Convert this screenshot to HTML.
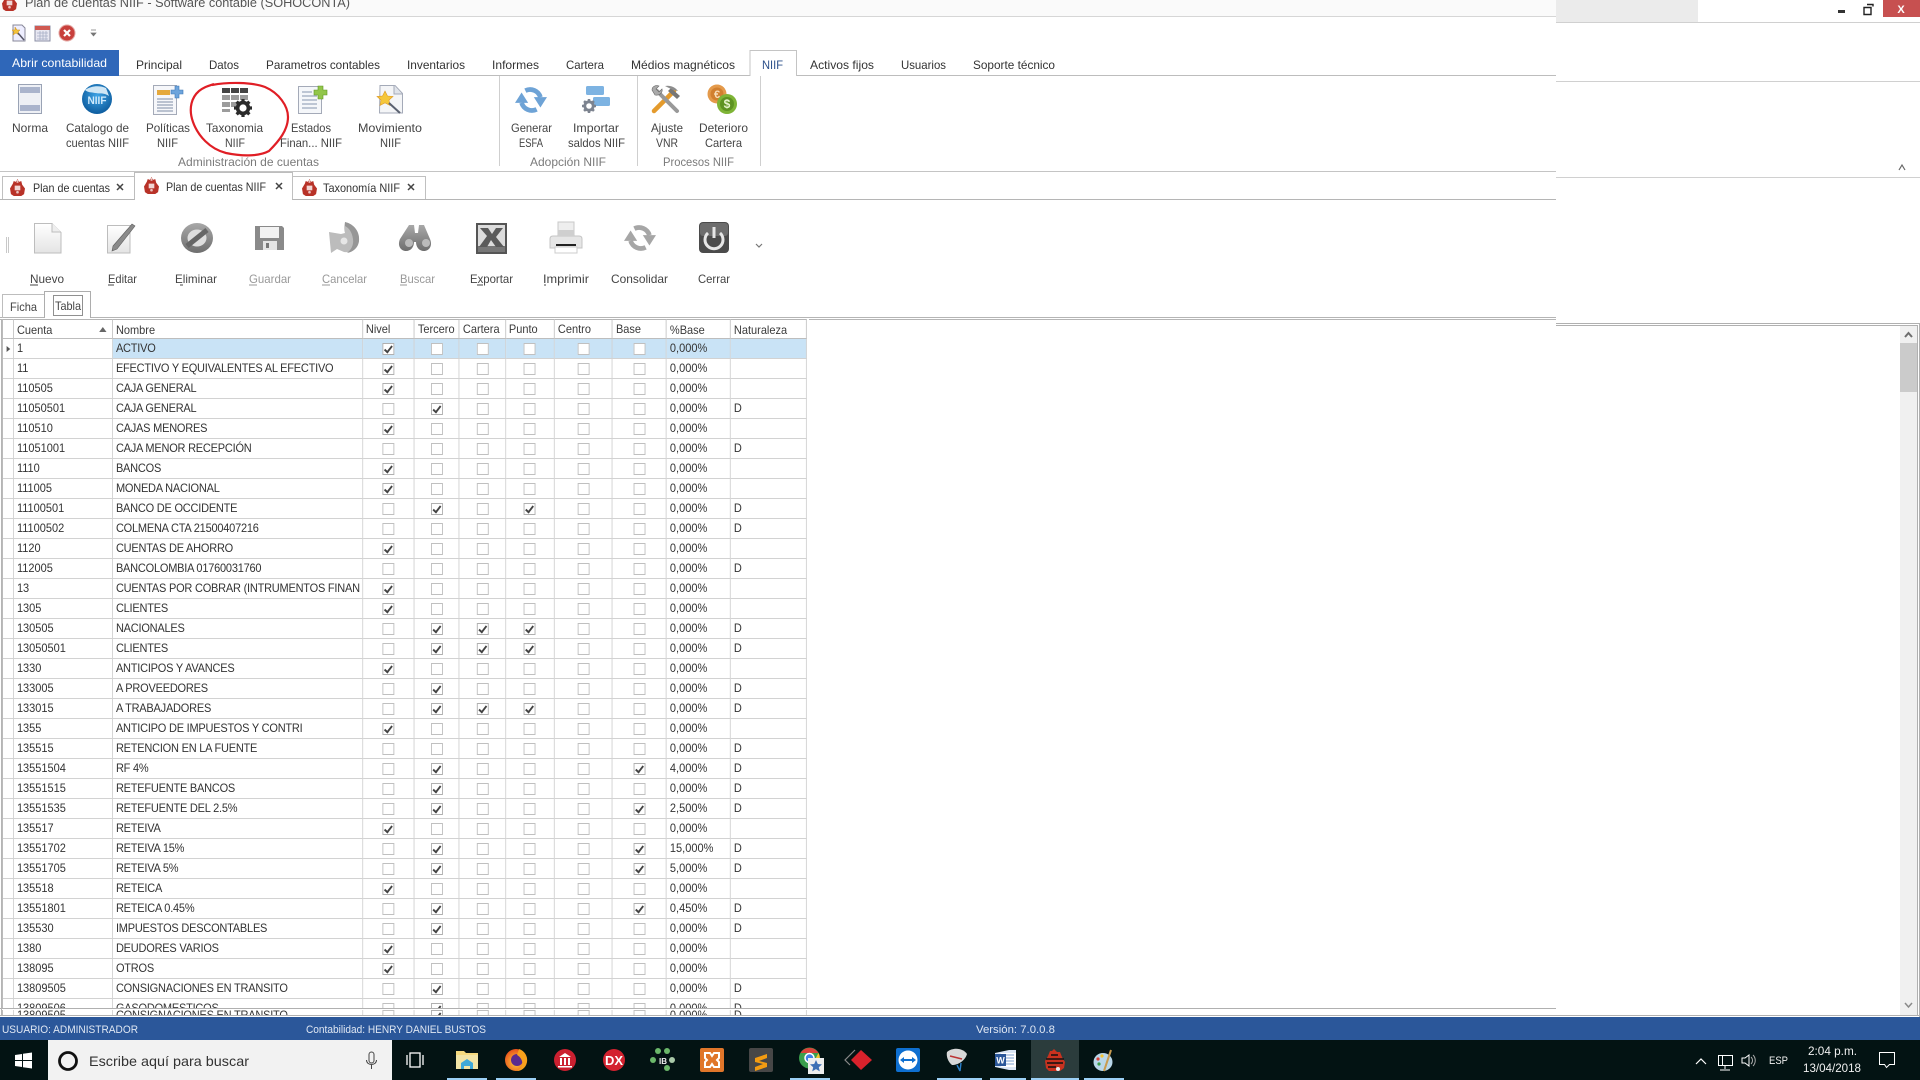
<!DOCTYPE html>
<html lang="es"><head><meta charset="utf-8"><title>Plan de cuentas NIIF - Software contable (SOHOCONTA)</title>
<style>
html,body{margin:0;padding:0;background:#fff;width:1920px;height:1080px;overflow:hidden}
svg.bg{position:absolute;left:0;top:0}
svg text{font-family:"Liberation Sans",sans-serif}
.g{position:absolute;left:2px;width:807px;overflow:hidden;background:#fff}
table{border-collapse:separate;border-spacing:0;table-layout:fixed;width:878.1px;font:12px/19px "Liberation Sans",sans-serif;color:#333;border-left:1px solid #b5b5b5;transform:scaleX(.91667);transform-origin:0 0}
td{height:20px;box-sizing:border-box;padding:0 0 0 3.3px;border-right:1px solid #d2d2d2;border-bottom:1px solid #d2d2d2;white-space:nowrap;overflow:hidden;vertical-align:middle}
td:nth-child(3){letter-spacing:-.24px}
td:nth-child(n+4):nth-child(-n+9){text-align:center;padding:0}
tr.h td{border-top:1px solid #b5b5b5;border-bottom:1px solid #bdbdbd;border-right:1px solid #c6c6c6;text-align:left!important;padding-left:3.3px!important;padding-top:2px;line-height:16px;letter-spacing:0;color:#3a3a3a}
tr.s td:nth-child(n+3){background:#c9e3f6}
i{display:inline-block;width:13px;height:12px;box-sizing:border-box;border:1px solid #c0c0c0;background:#fff;vertical-align:middle;position:relative}
i.c{border-color:#b0b0b0}
i.c:after{content:"";position:absolute;left:3px;top:0;width:3px;height:7px;border-right:2px solid #444;border-bottom:2px solid #444;transform:rotate(40deg)}
</style></head><body>
<svg class="bg" width="1920" height="1080" viewBox="0 0 1920 1080" xmlns="http://www.w3.org/2000/svg">
<defs>
<linearGradient id="pg" x1="0" y1="0" x2="0" y2="1"><stop offset="0" stop-color="#fff"/><stop offset="1" stop-color="#e4e4e4"/></linearGradient>
<linearGradient id="gr" x1="0" y1="0" x2="0" y2="1"><stop offset="0" stop-color="#a8a8a8"/><stop offset="1" stop-color="#6e6e6e"/></linearGradient>
<radialGradient id="gl" cx=".5" cy=".4" r=".6"><stop offset="0" stop-color="#3fa4e6"/><stop offset="1" stop-color="#0d5c9e"/></radialGradient>
<radialGradient id="ffx" cx=".5" cy=".6" r=".6"><stop offset="0" stop-color="#ffce3a"/><stop offset="1" stop-color="#e8501c"/></radialGradient>
<symbol id="sync" viewBox="-17 -17 34 34" overflow="visible">
<path d="M6 10A11.500 11.500 0 0 1-10 3M-6-10A11.500 11.500 0 0 1 10-3" fill="none" stroke="currentColor" stroke-width="5"/>
<path d="M-17 3H-3L-10-8zM17-3H3L10 8z" fill="currentColor"/>
</symbol>
<symbol id="blob" viewBox="0 0 16 18" overflow="visible">
<path d="M8 0l2 3 2-1 1 4 3 4-1 6-3 2H4l-3-2-1-6 3-5 1-3 2 1z" fill="#b83228"/>
<path d="M5 7h6v5H5z" fill="#fff" opacity=".8"/><path d="M7 1h2v3H7z" fill="#fff" opacity=".7"/><circle cx="8" cy="14" r="1.4" fill="#fff" opacity=".7"/>
</symbol>
<symbol id="gear" viewBox="-10 -10 20 20" overflow="visible">
<circle r="6" fill="none" stroke="currentColor" stroke-width="4"/>
<path d="M-1.8-10h3.6v4h-3.6zM-1.8 6h3.6v4h-3.6zM-10-1.8h4v3.6h-4zM6-1.8h4v3.6H6z" fill="currentColor"/>
<path d="M-1.8-10h3.6v4h-3.6zM-1.8 6h3.6v4h-3.6zM-10-1.8h4v3.6h-4zM6-1.8h4v3.6H6z" fill="currentColor" transform="rotate(45)"/>
</symbol>
</defs>

<!-- frame -->
<rect width="1920" height="16" fill="#fafafa"/>
<rect x="1556" width="142" height="22" fill="#ebebeb"/><rect x="1698" width="222" height="22" fill="#fff"/>
<rect y="16" width="1556" height="1" fill="#d6d6d6"/>
<rect x="1556" y="22" width="364" height="1" fill="#d0d0d0"/>
<rect x="119" y="75" width="1437" height="1" fill="#bdbdbd"/>
<rect x="1556" y="81" width="364" height="1" fill="#d0d0d0"/>
<rect y="171" width="1556" height="1" fill="#c4c4c4"/>
<rect x="1556" y="177" width="364" height="1" fill="#d0d0d0"/>
<rect y="199" width="1556" height="1" fill="#b5b5b5"/>
<rect y="317" width="1556" height="1" fill="#b5b5b5"/><rect y="319" width="1556" height="1" fill="#b5b5b5"/>
<rect x="1556" y="323" width="364" height="1" fill="#b0b0b0"/><rect x="1556" y="325" width="361" height="1" fill="#b0b0b0"/>
<rect x="1917" y="325" width="1" height="690" fill="#b0b0b0"/><rect x="1919" y="323" width="1" height="694" fill="#b0b0b0"/>
<rect y="1008" width="1556" height="1" fill="#b0b0b0"/>
<rect y="1015" width="1920" height="1" fill="#b0b0b0"/>
<rect x="1" y="319" width="1" height="696" fill="#b5b5b5"/>

<!-- title -->
<use href="#blob" x="2" y="-6" width="15" height="17"/>
<text x="25" y="7" font-size="13" fill="#555" textLength="325" lengthAdjust="spacingAndGlyphs">Plan de cuentas NIIF - Software contable (SOHOCONTA)</text>
<rect x="1883" width="37" height="17" fill="#c75050"/>
<text x="1901" y="13" font-size="11" font-weight="bold" fill="#fff" text-anchor="middle">X</text>
<rect x="1838" y="10" width="7" height="3" fill="#333"/>
<path d="M1864 7.500h7v7h-7zM1867 4.500h6v2" fill="#fff" stroke="#222" stroke-width="1.400"/>
<path d="M1899 170l3-5 3 5" fill="none" stroke="#666" stroke-width="1.200"/>

<!-- quick access -->
<g>
<path d="M13 25h9l3 3v13H13z" fill="#eef" stroke="#889"/>
<path d="M15 27l2 3 3 0-2 2 1 3-3-2-3 2 1-3-2-2 3 0z" fill="#f3c33a" stroke="#c98a10" stroke-width=".5"/>
<path d="M18 33l6 7" stroke="#556" stroke-width="1.500"/>
<rect x="35" y="26" width="15" height="15" fill="#e8e8f2" stroke="#8b8fa5"/><rect x="35" y="26" width="15" height="4" fill="#cf5a52"/>
<path d="M37 33h11M37 36h11M37 39h11M40 31v9M43 31v9M46 31v9" stroke="#a7aec6" stroke-width=".8"/>
<circle cx="67" cy="33" r="8" fill="#c8403c"/><circle cx="67" cy="33" r="8" fill="none" stroke="#e3a6a2"/><path d="M64 30l6 6m0-6l-6 6" stroke="#fff" stroke-width="2.200"/>
<path d="M91 30h5M91 33h5l-2.500 3z" fill="#777" stroke="#777" stroke-width=".7"/>
</g>

<!-- ribbon tabs -->
<rect y="50" width="119" height="26" fill="#2f67b9"/>
<text x="12" y="67" font-size="12" fill="#fff" textLength="95" lengthAdjust="spacingAndGlyphs">Abrir contabilidad</text>
<g font-size="12" fill="#333">
<text x="136" y="69" textLength="46" lengthAdjust="spacingAndGlyphs">Principal</text>
<text x="209" y="69" textLength="30" lengthAdjust="spacingAndGlyphs">Datos</text>
<text x="266" y="69" textLength="114" lengthAdjust="spacingAndGlyphs">Parametros contables</text>
<text x="407" y="69" textLength="58" lengthAdjust="spacingAndGlyphs">Inventarios</text>
<text x="492" y="69" textLength="47" lengthAdjust="spacingAndGlyphs">Informes</text>
<text x="566" y="69" textLength="38" lengthAdjust="spacingAndGlyphs">Cartera</text>
<text x="631" y="69" textLength="104" lengthAdjust="spacingAndGlyphs">Médios magnéticos</text>
<text x="810" y="69" textLength="64" lengthAdjust="spacingAndGlyphs">Activos fijos</text>
<text x="901" y="69" textLength="45" lengthAdjust="spacingAndGlyphs">Usuarios</text>
<text x="973" y="69" textLength="82" lengthAdjust="spacingAndGlyphs">Soporte técnico</text>
</g>
<path d="M750 76V50.500H796.500V76" fill="#fff" stroke="#c4c4c4"/><rect x="751" y="74" width="45" height="3" fill="#fff"/>
<text x="762" y="69" font-size="12" fill="#2b4f8a" textLength="21" lengthAdjust="spacingAndGlyphs">NIIF</text>

<!-- ribbon labels -->
<g font-size="12" fill="#444">
<text x="12" y="132" textLength="36" lengthAdjust="spacingAndGlyphs">Norma</text>
<text x="66" y="132" textLength="63" lengthAdjust="spacingAndGlyphs">Catalogo de</text>
<text x="66" y="147" textLength="63" lengthAdjust="spacingAndGlyphs">cuentas NIIF</text>
<text x="146" y="132" textLength="44" lengthAdjust="spacingAndGlyphs">Políticas</text>
<text x="157" y="147" textLength="21" lengthAdjust="spacingAndGlyphs">NIIF</text>
<text x="206" y="132" textLength="57" lengthAdjust="spacingAndGlyphs">Taxonomia</text>
<text x="225" y="147" textLength="20" lengthAdjust="spacingAndGlyphs">NIIF</text>
<text x="291" y="132" textLength="40" lengthAdjust="spacingAndGlyphs">Estados</text>
<text x="280" y="147" textLength="62" lengthAdjust="spacingAndGlyphs">Finan... NIIF</text>
<text x="358" y="132" textLength="64" lengthAdjust="spacingAndGlyphs">Movimiento</text>
<text x="380" y="147" textLength="21" lengthAdjust="spacingAndGlyphs">NIIF</text>
<text x="511" y="132" textLength="41" lengthAdjust="spacingAndGlyphs">Generar</text>
<text x="519" y="147" textLength="24" lengthAdjust="spacingAndGlyphs">ESFA</text>
<text x="573" y="132" textLength="46" lengthAdjust="spacingAndGlyphs">Importar</text>
<text x="568" y="147" textLength="57" lengthAdjust="spacingAndGlyphs">saldos NIIF</text>
<text x="651" y="132" textLength="32" lengthAdjust="spacingAndGlyphs">Ajuste</text>
<text x="656" y="147" textLength="22" lengthAdjust="spacingAndGlyphs">VNR</text>
<text x="699" y="132" textLength="49" lengthAdjust="spacingAndGlyphs">Deterioro</text>
<text x="705" y="147" textLength="37" lengthAdjust="spacingAndGlyphs">Cartera</text>
</g>
<g font-size="12" fill="#7a7a7a">
<text x="178" y="166" textLength="141" lengthAdjust="spacingAndGlyphs">Administración de cuentas</text>
<text x="530" y="166" textLength="76" lengthAdjust="spacingAndGlyphs">Adopción NIIF</text>
<text x="663" y="166" textLength="71" lengthAdjust="spacingAndGlyphs">Procesos NIIF</text>
</g>
<path d="M499.500 76V166M637.500 76V166M760.500 76V166" stroke="#cfcfcf"/>

<!-- ribbon icons -->
<rect x="18.500" y="84.500" width="23" height="29" fill="#eef0f5" stroke="#9aa3b5"/><rect x="20" y="87" width="20" height="6" fill="#aab4cc"/><rect x="20" y="105" width="20" height="6" fill="#aab4cc"/>
<circle cx="97" cy="99" r="15" fill="url(#gl)"/><path d="M85 90c6-4 14-5 21-2l3 8c-6-4-10-2-14-3s-6 0-10-3z" fill="#cfe6f5"/>
<text x="97" y="104" font-size="11" font-weight="bold" fill="#cfe9fb" text-anchor="middle" textLength="19" lengthAdjust="spacingAndGlyphs">NIIF</text>
<rect x="153.500" y="85.500" width="23" height="29" fill="#f6f7fa" stroke="#a4aab8"/><rect x="157" y="90" width="13" height="5" fill="#e5a93c"/>
<path d="M157 99h16M157 102h16M157 105h16M157 108h16M157 111h16" stroke="#7f8ca5"/>
<path d="M175 86h4v4h4v4h-4v4h-4v-4h-4v-4h4z" fill="#6da4dc" stroke="#3d78b6" stroke-width=".6"/>
<rect x="222" y="88" width="8" height="5" fill="#444"/><rect x="231" y="88" width="8" height="5" fill="#444"/><rect x="240" y="88" width="8" height="5" fill="#444"/>
<g fill="#9c9c9c"><rect x="222" y="95" width="8" height="5"/><rect x="231" y="95" width="8" height="5"/><rect x="240" y="95" width="8" height="5"/><rect x="222" y="102" width="8" height="5"/><rect x="231" y="102" width="8" height="5"/><rect x="222" y="109" width="8" height="3"/></g>
<use href="#gear" x="234" y="99" width="18" height="18" color="#2b2b2b"/>
<rect x="298.500" y="86.500" width="23" height="27" fill="#f5f7fa" stroke="#a4aab8"/><path d="M302 92h10M302 96h15M302 100h15M302 104h15M302 108h15" stroke="#8595ad"/>
<path d="M318 86h5v4h4v5h-4v4h-5v-4h-4v-5h4z" fill="#92c64a" stroke="#5f9425" stroke-width=".6"/>
<path d="M380 85.500h15l7.500 8v19.500h-23z" fill="#f4f5f7" stroke="#a4aab8"/><path d="M394 85v9h8" fill="#dfe3ea" stroke="#a4aab8"/>
<path d="M385 91l2.500 5 5.500.5-4 3.500 1 5.500-5-2.700-5 2.700 1-5.500-4-3.500 5.500-.5z" fill="#f5c73a" stroke="#dc9622" stroke-width=".6"/>
<path d="M389 103l11 10" stroke="#5a6170" stroke-width="2"/>
<use href="#sync" x="515" y="84" width="32" height="32" color="#6ea3d6"/>
<rect x="586" y="86" width="18" height="9" rx="1.500" fill="#7db3e2"/><rect x="593" y="97" width="17" height="9" rx="1.500" fill="#7db3e2"/>
<use href="#gear" x="582" y="99" width="14" height="14" color="#7c838f"/>
<path d="M654 111l20-20" stroke="#e49b2d" stroke-width="4.500" stroke-linecap="round"/>
<path d="M671 88l9 8-3 3-9-8z" fill="#777"/><path d="M665 86c5-1 10 1 13 5l-5-1z" fill="#8d8d8d"/>
<path d="M657 91l20 20" stroke="#999" stroke-width="4" stroke-linecap="round"/>
<path d="M652 90c0-4 4-5 7-4l-3 3 3 3 3-3c1 4-3 7-7 6z" fill="#aaa" stroke="#666" stroke-width=".6"/>
<circle cx="717" cy="94" r="9.500" fill="#e49a4b"/><circle cx="717" cy="94" r="6.500" fill="#d17f2f"/><text x="717" y="98" font-size="11" font-weight="bold" fill="#f8dcb7" text-anchor="middle">€</text>
<circle cx="727" cy="104" r="10" fill="#7eb436"/><circle cx="727" cy="104" r="7" fill="#5e9322"/><text x="727" y="108" font-size="12" font-weight="bold" fill="#e8f4cf" text-anchor="middle">$</text>

<!-- red circle annotation -->
<path d="M212 85C228 82 252 82 265 87C279 93 288 106 288 117C288 130 279 141 269 151C258 157 240 156 226 153C210 149 198 136 193 122C188 108 192 97 199 91C204 87 208 86 214 84" fill="none" stroke="#e01e25" stroke-width="2.200"/>

<!-- document tabs -->
<path d="M2.500 199V176.500H134M292 176.500H425.500V199" fill="none" stroke="#c0c0c0"/>
<path d="M134.500 199.500V172.500H292.500V199.500" fill="#fff" stroke="#bdbdbd"/>
<path d="M292.500 175V199" stroke="#c0c0c0"/>
<rect x="135" y="198" width="157" height="3" fill="#fff"/>
<use href="#blob" x="10" y="179" width="15" height="17"/><use href="#blob" x="144" y="177" width="15" height="17"/><use href="#blob" x="302" y="179" width="15" height="17"/>
<g font-size="12" fill="#333">
<text x="33" y="192" textLength="77" lengthAdjust="spacingAndGlyphs">Plan de cuentas</text>
<text x="166" y="191" textLength="100" lengthAdjust="spacingAndGlyphs">Plan de cuentas NIIF</text>
<text x="323" y="192" textLength="77" lengthAdjust="spacingAndGlyphs">Taxonomía NIIF</text>
</g>
<path d="M117 184l6 6m0-6l-6 6M276 183l6 6m0-6l-6 6M408 184l6 6m0-6l-6 6" stroke="#444" stroke-width="1.500"/>

<!-- toolbar -->
<path d="M6.500 237v16M8.500 237v16" stroke="#c8c8c8"/>
<g font-size="12" fill="#444">
<text x="30" y="283" textLength="34" lengthAdjust="spacingAndGlyphs">Nuevo</text>
<text x="108" y="283" textLength="29" lengthAdjust="spacingAndGlyphs">Editar</text>
<text x="175" y="283" textLength="42" lengthAdjust="spacingAndGlyphs">Eliminar</text>
<text x="470" y="283" textLength="43" lengthAdjust="spacingAndGlyphs">Exportar</text>
<text x="543" y="283" textLength="46" lengthAdjust="spacingAndGlyphs">Imprimir</text>
<text x="611" y="283" textLength="57" lengthAdjust="spacingAndGlyphs">Consolidar</text>
<text x="698" y="283" textLength="32" lengthAdjust="spacingAndGlyphs">Cerrar</text>
</g>
<g font-size="12" fill="#999">
<text x="249" y="283" textLength="42" lengthAdjust="spacingAndGlyphs">Guardar</text>
<text x="322" y="283" textLength="45" lengthAdjust="spacingAndGlyphs">Cancelar</text>
<text x="400" y="283" textLength="35" lengthAdjust="spacingAndGlyphs">Buscar</text>
</g>
<path d="M30 285h8M108 285h6M180 285h3M544 285h2M477 285h6" stroke="#444"/>
<path d="M249 285h8M322 285h8M400 285h7" stroke="#999"/>
<!-- toolbar icons -->
<path d="M34.500 223.500H52l9 9v20.500H34.500z" fill="url(#pg)" stroke="#bdbdbd"/><path d="M52 223v9h9" fill="#eee" stroke="#bdbdbd"/>
<path d="M107.500 225.500H130v27.500H107.500z" fill="url(#pg)" stroke="#bdbdbd"/><path d="M113 246l19-22 3 2-18 23-5 2z" fill="#8a8a8a" stroke="#5f5f5f" stroke-width=".6"/>
<ellipse cx="197" cy="238" rx="16" ry="15" fill="url(#gr)"/><ellipse cx="197" cy="238" rx="9.500" ry="8.500" fill="#dedede"/><path d="M187 246l20-16" stroke="#666" stroke-width="5"/>
<path d="M255 226h27l2 2v22h-29z" fill="#8a8a8a"/><rect x="260" y="227" width="19" height="11" fill="#f2f2f2"/><rect x="263" y="241" width="14" height="9" fill="#e4e4e4"/><rect x="266" y="243" width="3" height="5" fill="#777"/>
<path d="M329 232l12 2 4-1c-1-3-1-7 0-11 9 2 15 10 14 19-1 8-8 12-15 11l-7-3-6 4z" fill="#bcbcbc"/><path d="M345 222c9 2 15 10 14 19-1 7-6 11-12 12 4-3 7-8 6-14-1-7-4-11-8-13z" fill="#969696"/><circle cx="344" cy="241" r="3.500" fill="#e6e6e6"/>
<path d="M409 225h5l1 8h3l1-8h5l6 14c3 7-1 12-6 12s-8-4-8-9h-2c0 5-3 9-8 9s-9-5-6-12z" fill="url(#gr)"/><circle cx="409" cy="243" r="4" fill="#bbb"/><circle cx="426" cy="243" r="4" fill="#bbb"/>
<rect x="476" y="223" width="31" height="31" fill="#555"/><rect x="478" y="225" width="27" height="27" fill="#dcdcdc"/><rect x="478" y="246" width="27" height="6" fill="#777"/>
<path d="M480 228h8l4 6 4-6h7l-7 9 8 10h-8l-5-7-4 7h-8l8-11z" fill="#5a5a5a"/>
<rect x="558" y="222" width="16" height="14" fill="#eee" stroke="#c8c8c8"/><path d="M553 236h26c2 0 3 1 3 3v9h-32v-9c0-2 1-3 3-3z" fill="#e6e6e6" stroke="#c4c4c4"/><rect x="556" y="244" width="20" height="2" fill="#222"/><rect x="555" y="247" width="22" height="6" fill="#fff" stroke="#ccc"/><rect x="558" y="230" width="16" height="6" fill="#cfcfcf"/>
<use href="#sync" x="624" y="222" width="32" height="32" color="#a6a6a6"/>
<rect x="699" y="222" width="30" height="31" rx="4" fill="#4b4b4b"/><rect x="700" y="223" width="28" height="13" rx="3" fill="#6d6d6d"/>
<path d="M708 233a9 9 0 1 0 12 0" fill="none" stroke="#e6e6e6" stroke-width="3"/><path d="M714 227v11" stroke="#e6e6e6" stroke-width="3"/>
<path d="M756 244l3 3 3-3" fill="none" stroke="#777" stroke-width="1.200"/>

<!-- Ficha/Tabla -->
<path d="M2.500 318V294.500H44.500" fill="none" stroke="#bdbdbd"/>
<path d="M44.500 318V291.500H90.500V318" fill="#fff" stroke="#adadad"/><rect x="45" y="316" width="45" height="4" fill="#fff"/>
<rect x="53.500" y="295.500" width="29" height="20" fill="none" stroke="#222" stroke-dasharray="1 1"/>
<text x="10" y="311" font-size="12" fill="#444" textLength="27" lengthAdjust="spacingAndGlyphs">Ficha</text>
<text x="55" y="310" font-size="12" fill="#444" textLength="26" lengthAdjust="spacingAndGlyphs">Tabla</text>

<!-- scrollbar -->
<rect x="1900" y="326" width="17" height="689" fill="#f0f0f0"/>
<rect x="1900" y="343" width="17" height="49" fill="#cbcbcb"/>
<path d="M1905 337l3.500-4 3.500 4" fill="none" stroke="#6e6e6e" stroke-width="2"/>
<path d="M1905 1003l3.500 4 3.500-4" fill="none" stroke="#8a8a8a" stroke-width="1.500"/>

<!-- status bar -->
<rect y="1017" width="1920" height="23" fill="#2b579a"/>
<g font-size="11" fill="#dfe7f3">
<text x="2" y="1033" textLength="136" lengthAdjust="spacingAndGlyphs">USUARIO: ADMINISTRADOR</text>
<text x="306" y="1033" textLength="180" lengthAdjust="spacingAndGlyphs">Contabilidad: HENRY DANIEL BUSTOS</text>
<text x="976" y="1033" textLength="79" lengthAdjust="spacingAndGlyphs">Versión: 7.0.0.8</text>
</g>

<!-- taskbar -->
<rect y="1040" width="1920" height="40" fill="#031313"/>
<path d="M15 1055l7-1v6h-7zM23 1053.800l9-1.300v7.500h-9zM15 1061h7v6l-7-1zM23 1061h9v7.500l-9-1.300z" fill="#fff"/>
<rect x="48" y="1040" width="344" height="40" fill="#f2f2f2"/>
<circle cx="68" cy="1061" r="8.500" fill="none" stroke="#111" stroke-width="2.800"/>
<text x="89" y="1066" font-size="14" fill="#333" textLength="160" lengthAdjust="spacingAndGlyphs">Escribe aquí para buscar</text>
<rect x="369" y="1052" width="5" height="11" rx="2.500" fill="none" stroke="#444"/><path d="M366.500 1060c0 6 10 6 10 0M371.500 1065v4" fill="none" stroke="#444"/>
<rect x="410" y="1053" width="10" height="14" fill="none" stroke="#fff" stroke-width="1.300"/><path d="M407 1055v10M423 1055v10" stroke="#fff" stroke-width="1.300"/>

<!-- folder -->
<path d="M456 1051h8l2 2h12v16h-22z" fill="#f5d97e"/><rect x="456" y="1055" width="22" height="14" fill="#f2e4a6"/><path d="M461 1069v-6l6-4 6 4v6h-3v-3h-6v3z" fill="#3fa9d9"/>
<!-- firefox -->
<circle cx="516" cy="1060" r="11" fill="url(#ffx)"/><circle cx="517" cy="1060" r="6" fill="#5b2a8f"/><path d="M519 1049c6 2 9 8 8 13-1 6-6 9-10 9 4-2 6-6 5-10-1-3-3-5-5-6z" fill="#f9a01c"/>
<!-- red temple -->
<circle cx="565" cy="1060" r="11" fill="#cb2030"/><path d="M559 1057l6-4 6 4zM560 1058h2v7h-2zM564 1058h2v7h-2zM568 1058h2v7h-2zM558 1066h14v1.500h-14z" fill="#fff"/>
<!-- DX -->
<circle cx="614" cy="1060" r="11" fill="#d3222f"/><text x="614" y="1065" font-size="13" font-weight="bold" fill="#fff" text-anchor="middle">DX</text>
<!-- IB -->
<g fill="#6bb86a"><circle cx="658" cy="1051" r="3"/><circle cx="667" cy="1051" r="3"/><circle cx="653" cy="1060" r="3"/><circle cx="672" cy="1060" r="3" fill="#a9c9a9"/><circle cx="667" cy="1068" r="3"/></g>
<text x="663" y="1064" font-size="8" font-weight="bold" fill="#eee" text-anchor="middle">IB</text>
<!-- xampp -->
<rect x="700" y="1048" width="24" height="24" rx="2" fill="#e0762a"/><path d="M705 1053h5l2 3 2-3h5v5l-2 2 2 2v5h-5l-2-3-2 3h-5v-5l2-2-2-2z" fill="none" stroke="#fff" stroke-width="2"/>
<!-- sublime -->
<rect x="749" y="1048" width="24" height="24" rx="2" fill="#474747"/><path d="M755 1058l12-4v4l-8 3 8 2v4l-12 4v-4l8-3-8-2z" fill="#f39c12"/>
<!-- chrome -->
<circle cx="809.500" cy="1058" r="10.500" fill="#3a9e4c"/><path d="M800.500 1053a10.500 10.500 0 0 1 18 0h-9z" fill="#d9423a"/><path d="M818.500 1053a10.500 10.500 0 0 1-9 15.500l5-8z" fill="#f5c431"/><circle cx="809.500" cy="1058" r="4.500" fill="#3f80e6" stroke="#fff" stroke-width="1.500"/>
<rect x="808" y="1058" width="16" height="16" fill="#eee"/><path d="M816 1060l1.800 4 4.200.4-3.200 2.800 1 4.200-3.800-2.300-3.800 2.300 1-4.200-3.200-2.800 4.200-.4z" fill="#3c6fb5"/>
<!-- red diamond -->
<path d="M855 1050l-10 10 5 5" fill="none" stroke="#888" stroke-width="1.200"/><path d="M861 1050l11 10-11 10-10-10z" fill="#d8222c"/>
<!-- teamviewer -->
<rect x="896" y="1048" width="24" height="24" rx="2" fill="#0e6fd0"/><circle cx="908" cy="1060" r="9.500" fill="#fff"/><path d="M900 1060l4-3v2h8v-2l4 3-4 3v-2h-8v2z" fill="#0e6fd0"/>
<!-- snip -->
<path d="M947 1052c6-5 16-4 20 2-2 7-9 11-15 11-4-3-6-9-5-13z" fill="#d8d8d8"/><path d="M950 1056l12 3" stroke="#b33" stroke-width="1.500"/><path d="M957 1065l3 6m1-8l-1 8" stroke="#2b7fc9" stroke-width="1.400"/>
<!-- word -->
<path d="M995 1053l14-3h7v20h-7l-14-3z" fill="#dbe6f5"/><rect x="1001" y="1053" width="15" height="14" fill="#fff"/><path d="M1003 1055h11M1003 1058h11M1003 1061h11M1003 1064h11" stroke="#7da0d0"/><rect x="995" y="1054" width="11" height="12" fill="#2a5699"/><text x="1000.500" y="1063.500" font-size="9" font-weight="bold" fill="#fff" text-anchor="middle">W</text>
<!-- active app -->
<rect x="1031" y="1040" width="48" height="38" fill="#2b3c3c"/>
<path d="M1054 1049l3 3 3 0 2 5 3 5-1 6-4 3h-11l-3-3-1-7 3-5 2-5 2 0z" fill="#c8321f"/><path d="M1046 1059h18M1047 1063h16M1048 1067h8M1051 1055h7" stroke="#111" stroke-width="1.500"/><circle cx="1058" cy="1069" r="2" fill="#eee"/>
<!-- palette -->
<ellipse cx="1103" cy="1062" rx="9.500" ry="9" fill="#b9d7ea"/><circle cx="1098" cy="1059" r="1.600" fill="#d9423a"/><circle cx="1102" cy="1056" r="1.600" fill="#f5c431"/><circle cx="1099" cy="1064" r="1.600" fill="#3a9e4c"/><path d="M1104 1071l7-21" stroke="#c99b4f" stroke-width="2"/>
<!-- underlines -->
<g fill="#9cd0f5"><rect x="447" y="1078" width="40" height="2"/><rect x="496" y="1078" width="40" height="2"/><rect x="790" y="1078" width="40" height="2"/><rect x="937" y="1078" width="45" height="2"/><rect x="990" y="1078" width="36" height="2"/><rect x="1031" y="1078" width="48" height="2"/><rect x="1084" y="1078" width="40" height="2"/></g>
<!-- tray -->
<path d="M1696 1064l5-5 5 5" fill="none" stroke="#fff" stroke-width="1.200"/>
<rect x="1718.500" y="1055.500" width="14" height="10" fill="none" stroke="#fff"/><path d="M1722.500 1055.500v10M1725 1066v3M1720 1070h10" stroke="#fff"/>
<path d="M1742 1058h3l4-3v11l-4-3h-3z" fill="none" stroke="#fff"/><path d="M1751 1057c2 2 2 5 0 7M1753 1055c3 3 3 8 0 11" fill="none" stroke="#aaa"/>
<g fill="#f0f0f0">
<text x="1769" y="1064" font-size="11" textLength="19" lengthAdjust="spacingAndGlyphs">ESP</text>
<text x="1808" y="1055" font-size="12" textLength="49" lengthAdjust="spacingAndGlyphs">2:04 p.m.</text>
<text x="1803" y="1072" font-size="12" textLength="58" lengthAdjust="spacingAndGlyphs">13/04/2018</text>
</g>
<path d="M1879.500 1052.500h15v12h-5l-3 3-2-3h-5z" fill="none" stroke="#fff"/>
</svg>

<div class="g" style="top:319px;height:689px">
<table>
<colgroup><col style="width:12px"><col style="width:108px"><col style="width:272.700px"><col style="width:56.700px"><col style="width:49.100px"><col style="width:50.200px"><col style="width:53.500px"><col style="width:63.300px"><col style="width:58.900px"><col style="width:69.800px"><col style="width:82.900px"></colgroup>
<tr class="h"><td></td><td>Cuenta<span style="position:absolute;left:105px;top:8px;border:4px solid transparent;border-bottom:5px solid #666;border-top:0"></span></td><td>Nombre</td><td>Nivel</td><td>Tercero</td><td>Cartera</td><td>Punto</td><td>Centro</td><td>Base</td><td>%Base</td><td>Naturaleza</td></tr>
<tr class="s"><td style="padding:0 0 0 4px"><span style="display:block;width:0;border:3px solid transparent;border-left:4px solid #555"></span></td><td>1</td><td>ACTIVO</td><td><i class="c"></i></td><td><i></i></td><td><i></i></td><td><i></i></td><td><i></i></td><td><i></i></td><td>0,000%</td><td></td></tr>
<tr><td></td><td>11</td><td>EFECTIVO Y EQUIVALENTES AL EFECTIVO</td><td><i class="c"></i></td><td><i></i></td><td><i></i></td><td><i></i></td><td><i></i></td><td><i></i></td><td>0,000%</td><td></td></tr>
<tr><td></td><td>110505</td><td>CAJA GENERAL</td><td><i class="c"></i></td><td><i></i></td><td><i></i></td><td><i></i></td><td><i></i></td><td><i></i></td><td>0,000%</td><td></td></tr>
<tr><td></td><td>11050501</td><td>CAJA GENERAL</td><td><i></i></td><td><i class="c"></i></td><td><i></i></td><td><i></i></td><td><i></i></td><td><i></i></td><td>0,000%</td><td>D</td></tr>
<tr><td></td><td>110510</td><td>CAJAS MENORES</td><td><i class="c"></i></td><td><i></i></td><td><i></i></td><td><i></i></td><td><i></i></td><td><i></i></td><td>0,000%</td><td></td></tr>
<tr><td></td><td>11051001</td><td>CAJA MENOR RECEPCIÓN</td><td><i></i></td><td><i></i></td><td><i></i></td><td><i></i></td><td><i></i></td><td><i></i></td><td>0,000%</td><td>D</td></tr>
<tr><td></td><td>1110</td><td>BANCOS</td><td><i class="c"></i></td><td><i></i></td><td><i></i></td><td><i></i></td><td><i></i></td><td><i></i></td><td>0,000%</td><td></td></tr>
<tr><td></td><td>111005</td><td>MONEDA NACIONAL</td><td><i class="c"></i></td><td><i></i></td><td><i></i></td><td><i></i></td><td><i></i></td><td><i></i></td><td>0,000%</td><td></td></tr>
<tr><td></td><td>11100501</td><td>BANCO DE OCCIDENTE</td><td><i></i></td><td><i class="c"></i></td><td><i></i></td><td><i class="c"></i></td><td><i></i></td><td><i></i></td><td>0,000%</td><td>D</td></tr>
<tr><td></td><td>11100502</td><td>COLMENA CTA 21500407216</td><td><i></i></td><td><i></i></td><td><i></i></td><td><i></i></td><td><i></i></td><td><i></i></td><td>0,000%</td><td>D</td></tr>
<tr><td></td><td>1120</td><td>CUENTAS DE AHORRO</td><td><i class="c"></i></td><td><i></i></td><td><i></i></td><td><i></i></td><td><i></i></td><td><i></i></td><td>0,000%</td><td></td></tr>
<tr><td></td><td>112005</td><td>BANCOLOMBIA 01760031760</td><td><i></i></td><td><i></i></td><td><i></i></td><td><i></i></td><td><i></i></td><td><i></i></td><td>0,000%</td><td>D</td></tr>
<tr><td></td><td>13</td><td>CUENTAS POR COBRAR (INTRUMENTOS FINAN</td><td><i class="c"></i></td><td><i></i></td><td><i></i></td><td><i></i></td><td><i></i></td><td><i></i></td><td>0,000%</td><td></td></tr>
<tr><td></td><td>1305</td><td>CLIENTES</td><td><i class="c"></i></td><td><i></i></td><td><i></i></td><td><i></i></td><td><i></i></td><td><i></i></td><td>0,000%</td><td></td></tr>
<tr><td></td><td>130505</td><td>NACIONALES</td><td><i></i></td><td><i class="c"></i></td><td><i class="c"></i></td><td><i class="c"></i></td><td><i></i></td><td><i></i></td><td>0,000%</td><td>D</td></tr>
<tr><td></td><td>13050501</td><td>CLIENTES</td><td><i></i></td><td><i class="c"></i></td><td><i class="c"></i></td><td><i class="c"></i></td><td><i></i></td><td><i></i></td><td>0,000%</td><td>D</td></tr>
<tr><td></td><td>1330</td><td>ANTICIPOS Y AVANCES</td><td><i class="c"></i></td><td><i></i></td><td><i></i></td><td><i></i></td><td><i></i></td><td><i></i></td><td>0,000%</td><td></td></tr>
<tr><td></td><td>133005</td><td>A PROVEEDORES</td><td><i></i></td><td><i class="c"></i></td><td><i></i></td><td><i></i></td><td><i></i></td><td><i></i></td><td>0,000%</td><td>D</td></tr>
<tr><td></td><td>133015</td><td>A TRABAJADORES</td><td><i></i></td><td><i class="c"></i></td><td><i class="c"></i></td><td><i class="c"></i></td><td><i></i></td><td><i></i></td><td>0,000%</td><td>D</td></tr>
<tr><td></td><td>1355</td><td>ANTICIPO DE IMPUESTOS Y CONTRI</td><td><i class="c"></i></td><td><i></i></td><td><i></i></td><td><i></i></td><td><i></i></td><td><i></i></td><td>0,000%</td><td></td></tr>
<tr><td></td><td>135515</td><td>RETENCION EN LA FUENTE</td><td><i></i></td><td><i></i></td><td><i></i></td><td><i></i></td><td><i></i></td><td><i></i></td><td>0,000%</td><td>D</td></tr>
<tr><td></td><td>13551504</td><td>RF 4%</td><td><i></i></td><td><i class="c"></i></td><td><i></i></td><td><i></i></td><td><i></i></td><td><i class="c"></i></td><td>4,000%</td><td>D</td></tr>
<tr><td></td><td>13551515</td><td>RETEFUENTE BANCOS</td><td><i></i></td><td><i class="c"></i></td><td><i></i></td><td><i></i></td><td><i></i></td><td><i></i></td><td>0,000%</td><td>D</td></tr>
<tr><td></td><td>13551535</td><td>RETEFUENTE DEL 2.5%</td><td><i></i></td><td><i class="c"></i></td><td><i></i></td><td><i></i></td><td><i></i></td><td><i class="c"></i></td><td>2,500%</td><td>D</td></tr>
<tr><td></td><td>135517</td><td>RETEIVA</td><td><i class="c"></i></td><td><i></i></td><td><i></i></td><td><i></i></td><td><i></i></td><td><i></i></td><td>0,000%</td><td></td></tr>
<tr><td></td><td>13551702</td><td>RETEIVA 15%</td><td><i></i></td><td><i class="c"></i></td><td><i></i></td><td><i></i></td><td><i></i></td><td><i class="c"></i></td><td>15,000%</td><td>D</td></tr>
<tr><td></td><td>13551705</td><td>RETEIVA 5%</td><td><i></i></td><td><i class="c"></i></td><td><i></i></td><td><i></i></td><td><i></i></td><td><i class="c"></i></td><td>5,000%</td><td>D</td></tr>
<tr><td></td><td>135518</td><td>RETEICA</td><td><i class="c"></i></td><td><i></i></td><td><i></i></td><td><i></i></td><td><i></i></td><td><i></i></td><td>0,000%</td><td></td></tr>
<tr><td></td><td>13551801</td><td>RETEICA 0.45%</td><td><i></i></td><td><i class="c"></i></td><td><i></i></td><td><i></i></td><td><i></i></td><td><i class="c"></i></td><td>0,450%</td><td>D</td></tr>
<tr><td></td><td>135530</td><td>IMPUESTOS DESCONTABLES</td><td><i></i></td><td><i class="c"></i></td><td><i></i></td><td><i></i></td><td><i></i></td><td><i></i></td><td>0,000%</td><td>D</td></tr>
<tr><td></td><td>1380</td><td>DEUDORES VARIOS</td><td><i class="c"></i></td><td><i></i></td><td><i></i></td><td><i></i></td><td><i></i></td><td><i></i></td><td>0,000%</td><td></td></tr>
<tr><td></td><td>138095</td><td>OTROS</td><td><i class="c"></i></td><td><i></i></td><td><i></i></td><td><i></i></td><td><i></i></td><td><i></i></td><td>0,000%</td><td></td></tr>
<tr><td></td><td>13809505</td><td>CONSIGNACIONES EN TRANSITO</td><td><i></i></td><td><i class="c"></i></td><td><i></i></td><td><i></i></td><td><i></i></td><td><i></i></td><td>0,000%</td><td>D</td></tr>
<tr><td></td><td>13809506</td><td>GASODOMESTICOS</td><td><i></i></td><td><i class="c"></i></td><td><i></i></td><td><i></i></td><td><i></i></td><td><i></i></td><td>0,000%</td><td>D</td></tr>
</table>
</div>
<div class="g" style="top:1010px;height:5px">
<table style="margin-top:-4px">
<colgroup><col style="width:12px"><col style="width:108px"><col style="width:272.700px"><col style="width:56.700px"><col style="width:49.100px"><col style="width:50.200px"><col style="width:53.500px"><col style="width:63.300px"><col style="width:58.900px"><col style="width:69.800px"><col style="width:82.900px"></colgroup>
<tr><td></td><td>13809505</td><td>CONSIGNACIONES EN TRANSITO</td><td><i></i></td><td><i class="c"></i></td><td><i></i></td><td><i></i></td><td><i></i></td><td><i></i></td><td>0,000%</td><td>D</td></tr>
</table>
</div>
</body></html>
